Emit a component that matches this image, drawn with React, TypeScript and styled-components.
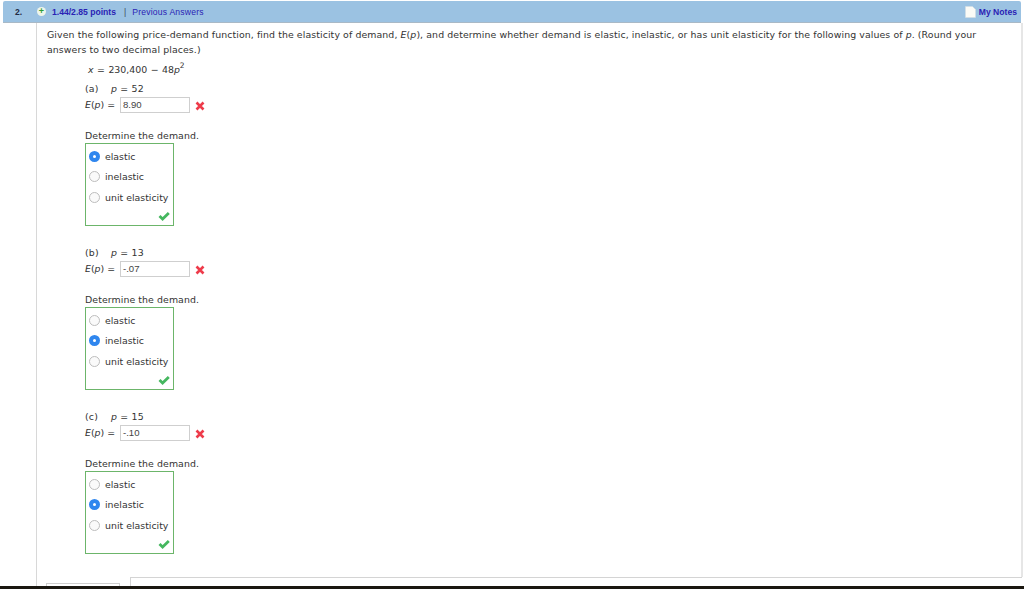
import * as React from "react";
import styled, { createGlobalStyle } from "styled-components";

const GlobalStyle = createGlobalStyle`
  html, body {
    margin: 0;
    padding: 0;
    background: #fff;
  }
`;

const Page = styled.div`
  width: 1024px;
  height: 589px;
  display: flex;
  flex-direction: column;
  overflow: hidden;
  background: #fff;
  font-family: "DejaVu Sans", sans-serif;
  font-size: 9.4px;
  color: #333;
`;

const Header = styled.div`
  height: 21px;
  margin: 1px 3px 0 3px;
  padding: 0 4px 0 12px;
  display: flex;
  align-items: center;
  flex: none;
  background: #9bc2e2;
  border-bottom: 1px solid #a9b9c6;
  border-radius: 2px 2px 0 0;
  font-family: "Liberation Sans", sans-serif;
  font-size: 8.6px;
`;

const Number = styled.b`
  width: 22px;
  color: #1f2a44;
`;

const PlusBadge = styled.span`
  width: 9px;
  height: 9px;
  margin-right: 6px;
  border-radius: 50%;
  background: #eef5ea;
  color: #2f9e35;
  font-size: 9px;
  font-weight: bold;
  line-height: 9px;
  text-align: center;
`;

const Points = styled.b`
  color: #2a22b4;
`;

const Pipe = styled.span`
  margin: 0 6px 0 8px;
  color: #3b4a5a;
`;

const HeaderLink = styled.span`
  color: #2a22b4;
  letter-spacing: 0.2px;
`;

const Notes = styled.div`
  margin-left: auto;
  display: flex;
  align-items: center;
  gap: 3px;
  color: #2a22b4;
  font-weight: bold;
`;

const Main = styled.div`
  flex: 1;
  margin-left: 36px;
  display: flex;
  flex-direction: column;
  border-left: 1px solid #d8d8d8;
  min-height: 0;
`;

const Question = styled.div`
  flex: 1;
  width: 974px;
  padding: 4px 0 0 10px;
  border-right: 2px solid #e6e6e6;
  min-height: 0;
`;

const Prompt = styled.p`
  margin: 0;
  width: 940px;
  line-height: 15px;
  letter-spacing: 0.09px;
`;

const Equation = styled.div`
  margin: 5px 0 3px 41px;
  height: 15px;
  line-height: 15px;
  word-spacing: 0.5px;
  sup {
    font-size: 7.5px;
    line-height: 0;
    position: relative;
    top: -1px;
  }
`;

const Part = styled.div`
  height: 163px;
  margin-left: 38px;
  padding-top: 1px;
`;

const PartLine = styled.div`
  height: 15px;
  line-height: 15px;
  display: flex;
  letter-spacing: 0.2px;
`;

const PartLabel = styled.span`
  width: 26px;
`;

const AnswerRow = styled.div`
  display: flex;
  align-items: center;
  height: 17px;
  margin-top: 0;
`;

const AnswerLabel = styled.span`
  width: 35px;
`;

const AnswerBox = styled.div`
  width: 66px;
  height: 14px;
  padding-left: 2px;
  border: 1px solid #cfcfcf;
  font-family: "Liberation Sans", sans-serif;
  font-size: 9.6px;
  line-height: 14px;
  color: #444;
`;

const CrossIcon = styled.svg`
  width: 10px;
  height: 10px;
  margin-left: 5px;
  margin-top: 2px;
`;

const DemandLabel = styled.div`
  margin-top: 15px;
  height: 15px;
  line-height: 15px;
  letter-spacing: 0.08px;
`;

const ChoiceBox = styled.div`
  position: relative;
  width: 89px;
  height: 83px;
  border: 1px solid #6cb56a;
  box-sizing: border-box;
  padding-top: 2px;
`;

const Choice = styled.div`
  height: 20.5px;
  display: flex;
  align-items: center;
  padding-left: 3px;
  gap: 5px;
`;

const Radio = styled.span<{ $on?: boolean }>`
  width: 11px;
  height: 11px;
  flex: none;
  box-sizing: border-box;
  border-radius: 50%;
  border: ${(p) => (p.$on ? "4px solid #2f86ee" : "1px solid #bdbdbd")};
  background: ${(p) => (p.$on ? "#fff" : "#fafafa")};
`;

const CheckIcon = styled.svg`
  position: absolute;
  right: 3px;
  bottom: 4px;
  width: 12px;
  height: 10px;
`;

const Footer = styled.div`
  height: 9px;
  flex: none;
  display: flex;
  width: 985px;
`;

const SubmitStub = styled.div`
  width: 72px;
  height: 4px;
  margin: 6px 0 0 9px;
  border: 1px solid #cfcfcf;
  border-bottom: none;
`;

const FooterRule = styled.div`
  flex: 1;
  margin-left: 10px;
  border-top: 1px solid #d4d4d4;
  border-left: 1px solid #d4d4d4;
`;

const DarkBand = styled.div`
  height: 3px;
  flex: none;
  background: #1a1710;
`;

const Cross = () => (
  <CrossIcon viewBox="0 0 10 10">
    <path d="M1.5 1.5 L8.5 8.5 M8.5 1.5 L1.5 8.5" stroke="#ee3b4a" strokeWidth="2.6" fill="none" />
  </CrossIcon>
);

const Check = () => (
  <CheckIcon viewBox="0 0 12 10">
    <path d="M1.5 5 L4.6 8 L10.8 2" stroke="#45b75f" strokeWidth="2.8" fill="none" />
  </CheckIcon>
);

const choices = ["elastic", "inelastic", "unit elasticity"];

const parts = [
  { label: "(a)", p: "52", value: "8.90", selected: 0 },
  { label: "(b)", p: "13", value: "-.07", selected: 1 },
  { label: "(c)", p: "15", value: "-.10", selected: 1 },
];

export default function App() {
  return (
    <Page>
      <GlobalStyle />
      <Header>
        <Number>2.</Number>
        <PlusBadge>+</PlusBadge>
        <Points>1.44/2.85 points</Points>
        <Pipe>|</Pipe>
        <HeaderLink>Previous Answers</HeaderLink>
        <Notes>
          <svg width="11" height="12" viewBox="0 0 11 12">
            <path d="M0.5 0.5 H7.5 L10.5 3.5 V11.5 H0.5 Z" fill="#fbfbf6" stroke="#d5dde2" strokeWidth="0.6" />
          </svg>
          My Notes
        </Notes>
      </Header>
      <Main>
        <Question>
          <Prompt>
            Given the following price-demand function, find the elasticity of demand, <i>E</i>(<i>p</i>), and
            determine whether demand is elastic, inelastic, or has unit elasticity for the following values of{" "}
            <i>p</i>. (Round your answers to two decimal places.)
          </Prompt>
          <Equation>
            <i>x</i> = 230,400 − 48<i>p</i>
            <sup>2</sup>
          </Equation>
          {parts.map((part) => (
            <Part key={part.label}>
              <PartLine>
                <PartLabel>{part.label}</PartLabel>
                <span>
                  <i>p</i> = {part.p}
                </span>
              </PartLine>
              <AnswerRow>
                <AnswerLabel>
                  <i>E</i>(<i>p</i>) =
                </AnswerLabel>
                <AnswerBox>{part.value}</AnswerBox>
                <Cross />
              </AnswerRow>
              <DemandLabel>Determine the demand.</DemandLabel>
              <ChoiceBox>
                {choices.map((choice, i) => (
                  <Choice key={choice}>
                    <Radio $on={i === part.selected} />
                    {choice}
                  </Choice>
                ))}
                <Check />
              </ChoiceBox>
            </Part>
          ))}
        </Question>
        <Footer>
          <SubmitStub />
          <FooterRule />
        </Footer>
      </Main>
      <DarkBand />
    </Page>
  );
}
